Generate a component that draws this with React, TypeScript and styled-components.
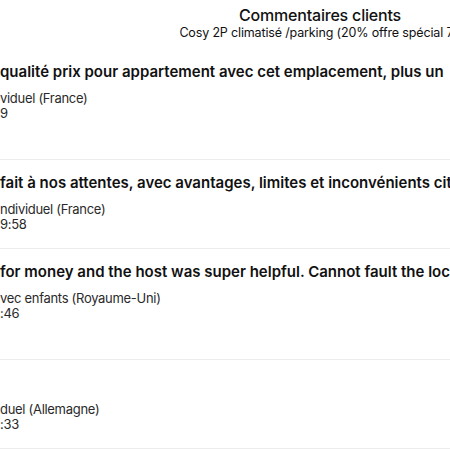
import React from 'react';
import styled, { createGlobalStyle } from 'styled-components';

const GlobalStyle = createGlobalStyle`
    body {
        margin: 0;
        background: #fff;
        font-family: Inter, "Noto Sans", sans-serif;
        color: #111;
    }
`;

const Page = styled.div`
    width: 450px;
    height: 450px;
    overflow: hidden;
    background: #fff;
`;

const Header = styled.header`
    width: 640px;
    padding-top: 5px;
    margin-bottom: 8px;
    text-align: center;
    white-space: nowrap;
`;

const HeaderTitle = styled.h1`
    margin: 0;
    font-size: 16px;
    line-height: 20px;
    font-weight: 500;
    letter-spacing: -0.2px;
    color: #111;
`;

const HeaderSubtitle = styled.div`
    font-size: 12.5px;
    line-height: 16px;
    letter-spacing: -0.15px;
    color: #111;
`;

const ReviewList = styled.ul`
    list-style: none;
    margin: 0;
    padding: 0;
`;

const ReviewItem = styled.li<{ $extra: boolean }>`
    display: flex;
    flex-direction: column;
    padding: 12px 0 ${(p) => (p.$extra ? '38px' : '16px')};
    border-bottom: 1px solid #ececec;
    white-space: nowrap;
    overflow: hidden;
`;

const ReviewTitle = styled.div`
    font-size: 15px;
    line-height: 22px;
    height: 22px;
    font-weight: 600;
    color: #111;
    margin-bottom: 8px;
`;

const Meta = styled.div`
    font-size: 13px;
    line-height: 15px;
    letter-spacing: -0.3px;
    color: #2a2a2a;
`;

type Review = {
    title: string;
    traveller: string;
    date: string;
    extra: boolean;
};

const reviews: Review[] = [
    {
        title: 'qualité prix pour appartement avec cet emplacement, plus un',
        traveller: 'viduel (France)',
        date: '9',
        extra: true,
    },
    {
        title: 'fait à nos attentes, avec avantages, limites et inconvénients cités',
        traveller: 'ndividuel (France)',
        date: '9:58',
        extra: false,
    },
    {
        title: 'for money and the host was super helpful. Cannot fault the location',
        traveller: 'vec enfants (Royaume-Uni)',
        date: ':46',
        extra: true,
    },
    {
        title: '',
        traveller: 'duel (Allemagne)',
        date: ':33',
        extra: false,
    },
];

const App = () => {
    return (
        <Page>
            <GlobalStyle />
            <Header>
                <HeaderTitle>Commentaires clients</HeaderTitle>
                <HeaderSubtitle>
                    Cosy 2P climatisé /parking (20% offre spécial 7j)
                </HeaderSubtitle>
            </Header>
            <ReviewList>
                {reviews.map((review, i) => (
                    <ReviewItem key={i} $extra={review.extra}>
                        <ReviewTitle>{review.title}</ReviewTitle>
                        <Meta>{review.traveller}</Meta>
                        <Meta>{review.date}</Meta>
                    </ReviewItem>
                ))}
            </ReviewList>
        </Page>
    );
};

export default App;
